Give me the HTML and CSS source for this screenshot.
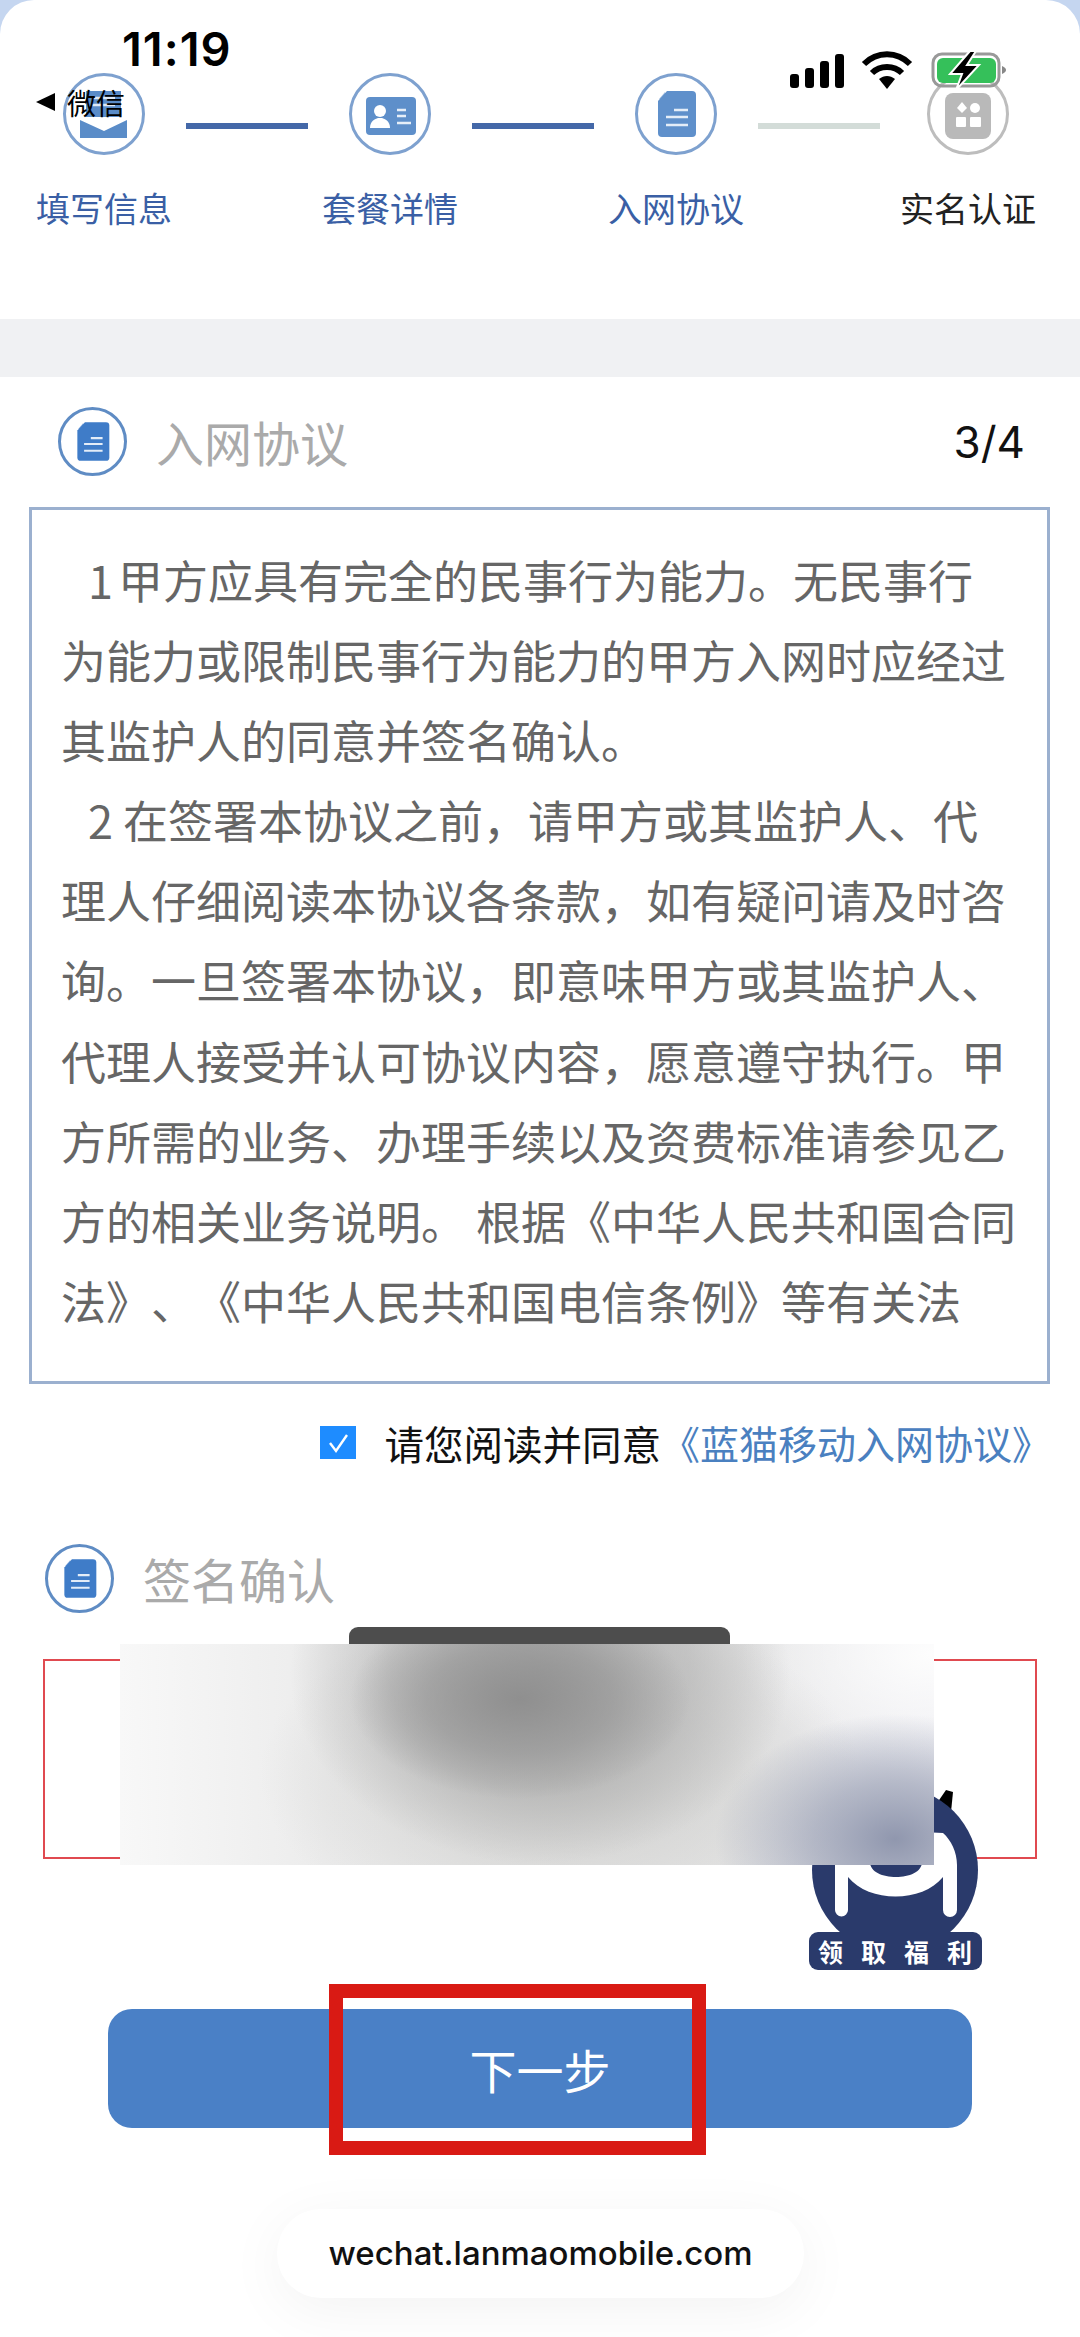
FILE: index.html
```html
<!DOCTYPE html>
<html lang="zh-CN">
<head>
  <meta charset="UTF-8">
  <meta name="viewport" content="width=device-width, initial-scale=1.0">
  <title>入网协议</title>
  <link rel="stylesheet" href="styles.css">
</head>
<body>

<svg class="defs" width="0" height="0">
  <symbol id="icoDoc" viewBox="0 0 82 82">
    <path d="M32 18H57a4 4 0 0 1 4 4V60a4 4 0 0 1-4 4H27a4 4 0 0 1-4-4V28z" fill="currentColor"/>
    <path d="M30 19V26H24z" fill="currentColor" opacity=".55"/>
    <path d="M39 37H53M31 44H53M31 52H53" stroke="#e4edf8" stroke-width="2.6" fill="none"/>
  </symbol>
</svg>

<div class="page">
  <!-- pasos -->
  <section class="steps">
    <div class="step">
      <div class="circle">
        <svg viewBox="0 0 82 82">
          <path d="M23 18H58V44H23z" fill="#5a8cc8"/>
          <path d="M29 25H52M29 32H52" stroke="#dfe9f6" stroke-width="2.5"/>
          <path d="M17 47L41 58L64 47V65H17z" fill="#5a8cc8"/>
        </svg>
      </div>
      <span class="step-name">填写信息</span>
    </div>
    <div class="step-line"></div>
    <div class="step">
      <div class="circle">
        <svg viewBox="0 0 82 82">
          <rect x="17" y="24" width="50" height="38" rx="4" fill="#5e8fca"/>
          <circle cx="31" cy="38" r="6" fill="#fff"/>
          <path d="M21 55C21 48 26 46 29 45H33C36 46 41 48 41 55z" fill="#fff"/>
          <path d="M48 37H57M48 43H57M48 50H62" stroke="#e6eef8" stroke-width="2.6"/>
        </svg>
      </div>
      <span class="step-name">套餐详情</span>
    </div>
    <div class="step-line"></div>
    <div class="step">
      <div class="circle">
        <svg viewBox="0 0 82 82"><use href="#icoDoc"/></svg>
      </div>
      <span class="step-name">入网协议</span>
    </div>
    <div class="step-line off"></div>
    <div class="step last">
      <div class="circle off">
        <svg viewBox="0 0 82 82">
          <rect x="18" y="20" width="46" height="46" rx="8" fill="#b9b9b9"/>
          <path d="M35 29L40 35L35 40L30 35z" fill="#fff"/>
          <circle cx="48" cy="35" r="5" fill="#fff"/>
          <rect x="29" y="44" width="10" height="10" rx="1" fill="#fff"/>
          <rect x="43" y="44" width="11" height="10" rx="1" fill="#fff"/>
        </svg>
      </div>
      <span class="step-name">实名认证</span>
    </div>
  </section>

  <div class="band"></div>

  <!-- protocolo -->
  <section class="sec-head first">
    <div class="sec-icon"><svg viewBox="0 0 82 82"><use href="#icoDoc"/></svg></div>
    <h2>入网协议</h2>
    <span class="count">3/4</span>
  </section>

  <div class="agreement">
    <p><span class="num">1</span>甲方应具有完全的民事行为能力。无民事行<br>
    为能力或限制民事行为能力的甲方入网时应经过<br>
    其监护人的同意并签名确认。</p>
    <p>2 在签署本协议之前，请甲方或其监护人、代<br>
    理人仔细阅读本协议各条款，如有疑问请及时咨<br>
    询。一旦签署本协议，即意味甲方或其监护人、<br>
    代理人接受并认可协议内容，愿意遵守执行。甲<br>
    方所需的业务、办理手续以及资费标准请参见乙<br>
    方的相关业务说明。 根据《中华人民共和国合同<br>
    法》、《中华人民共和国电信条例》等有关法</p>
  </div>

  <div class="agree">
    <span class="check">
      <svg viewBox="0 0 36 32"><path d="M10 17L16 25L27 9" fill="none" stroke="#fff" stroke-width="2.4"/></svg>
    </span>
    <span class="agree-text">请您阅读并同意</span>
    <a class="agree-link">《蓝猫移动入网协议》</a>
  </div>

  <!-- firma -->
  <section class="sec-head second">
    <div class="sec-icon"><svg viewBox="0 0 82 82"><use href="#icoDoc"/></svg></div>
    <h2>签名确认</h2>
  </section>

  <div class="sign"></div>

  <button class="next">下一步</button>

  <!-- encima del contenido -->
  <div class="toast"></div>

  <div class="badge">
    <svg class="badge-logo" viewBox="0 0 173 190">
      <path d="M126 24L137 8L144 10L142 30z" fill="#000"/>
      <circle cx="86" cy="88" r="83" fill="#2a3a6b"/>
      <path d="M26 60V128a6.500 6.500 0 0 0 13 0V95C60 121 113 121 134 95V128a7 7 0 0 0 14 0V83C148 70 142 58 134 51L113 50V80C113 100 61 100 61 80V50L26 50z" fill="#fff"/>
    </svg>
    <div class="badge-label">领取福利</div>
  </div>

  <div class="blur"></div>

  <div class="mark"></div>

  <div class="url">wechat.lanmaomobile.com</div>

  <!-- barra de estado -->
  <div class="time">11:19</div>
  <div class="back"><i></i>微信</div>
  <svg class="status" viewBox="0 0 220 40">
    <rect x="4" y="24" width="9" height="14" rx="3"/>
    <rect x="19" y="18" width="9" height="20" rx="3"/>
    <rect x="34" y="11" width="9" height="27" rx="3"/>
    <rect x="49" y="4" width="9" height="34" rx="3"/>
    <path d="M78 14C91 1 111 1 124 14" fill="none" stroke="#000" stroke-width="6"/>
    <path d="M86 23C94 15 108 15 116 23" fill="none" stroke="#000" stroke-width="6"/>
    <path d="M93 29C98 25 104 25 109 29L101 39z"/>
    <rect x="147" y="4" width="66" height="32" rx="9" fill="none" stroke="#999" stroke-width="3"/>
    <rect x="151" y="8" width="59" height="25" rx="6" fill="#35c05a"/>
    <path d="M216 16c3 1 4 3 4 4s-1 3-4 4z" fill="#888"/>
    <path d="M184 1L164 24H176L170 40L193 15H181L190 1z" stroke="#fff" stroke-width="2"/>
  </svg>
</div>

</body>
</html>
```

FILE: styles.css
```css
* {
  box-sizing: border-box;
}
html, body {
  margin: 0;
  padding: 0;
}
body {
  background-color: #c5d6f0;
  font-family: "Noto Sans CJK SC", "Noto Sans", sans-serif;
  text-spacing-trim: space-all;
}
.defs {
  position: absolute;
}
.page {
  position: relative;
  display: flex;
  flex-direction: column;
  width: 1080px;
  height: 2337px;
  overflow: hidden;
  background-color: #fff;
  border-radius: 34px 34px 0 0;
}
.steps {
  display: flex;
  align-items: flex-start;
  height: 319px;
  padding: 73px 0 0 37px;
}
.step {
  display: flex;
  flex-direction: column;
  align-items: center;
  width: 134px;
}
.step.last {
  margin-left: 6px;
}
.circle {
  width: 82px;
  height: 82px;
  border: 3px solid #7ea1cf;
  border-radius: 50%;
  color: #5f90cb;
}
.circle svg {
  display: block;
  width: 82px;
  height: 82px;
  margin: -3px;
}
.circle.off {
  border-color: #bdbdbd;
}
.step-name {
  margin-top: 33px;
  font-size: 34px;
  line-height: 40px;
  white-space: nowrap;
  color: #3a5fa5;
}
.step.last .step-name {
  color: #222;
}
.step-line {
  width: 122px;
  height: 6px;
  margin: 50px 15px 0;
  background-color: #4468a8;
}
.step-line.off {
  background-color: #d3dcd8;
}
.band {
  height: 58px;
  background-color: #f0f1f3;
}
.sec-head {
  display: flex;
  align-items: center;
  height: 69px;
}
.sec-head.first {
  margin-top: 30px;
  padding: 0 55px 0 58px;
}
.sec-head.second {
  margin-top: 77px;
  padding-left: 45px;
}
.sec-icon {
  flex: none;
  width: 69px;
  height: 69px;
  border: 3px solid #5f8cc4;
  border-radius: 50%;
  color: #3f7cc8;
}
.sec-icon svg {
  display: block;
  width: 69px;
  height: 69px;
  margin: -3px;
}
.sec-head h2 {
  margin: 0 0 0 29px;
  font-size: 48px;
  font-weight: 400;
  line-height: 69px;
  color: #aaa;
}
.count {
  margin-left: auto;
  font-family: "Inter", sans-serif;
  font-size: 44px;
  color: #111;
}
.agreement {
  height: 877px;
  margin: 31px 30px 0 29px;
  padding: 30px 0 0 29px;
  border: 3px solid #9bb0cf;
  overflow: hidden;
}
.agreement p {
  margin: 0;
  font-size: 45px;
  line-height: 80.1px;
  white-space: nowrap;
  color: #666;
  text-indent: 27px;
}
.num {
  margin-right: 5px;
}
.agree {
  display: flex;
  align-items: center;
  justify-content: flex-end;
  height: 50px;
  margin-top: 33px;
  padding-right: 29px;
  font-size: 39px;
  white-space: nowrap;
}
.check {
  width: 36px;
  height: 33px;
  margin-right: 28px;
  background-color: #1e8cff;
}
.check svg {
  display: block;
}
.agree-text {
  font-size: 39.5px;
  color: #111;
}
.agree-link {
  color: #4a80c0;
}
.sign {
  height: 200px;
  margin: 46px 43px 0;
  border: 2px solid #e04a50;
}
.next {
  display: block;
  width: 864px;
  height: 119px;
  margin: 150px 0 0 108px;
  padding: 0;
  border: none;
  border-radius: 24px;
  background-color: #4a80c6;
  font-family: inherit;
  font-size: 47px;
  color: #fff;
}
.toast {
  position: absolute;
  left: 349px;
  top: 1627px;
  width: 381px;
  height: 24px;
  border-radius: 9px 9px 0 0;
  background-color: #4d4d4d;
}
.blur {
  position: absolute;
  left: 120px;
  top: 1644px;
  width: 814px;
  height: 221px;
  background:
    radial-gradient(ellipse 180px 125px at 775px 195px, #9097ae 0%, rgba(144, 151, 174, .6) 45%, rgba(144, 151, 174, 0) 100%),
    radial-gradient(ellipse 170px 100px at 400px 55px, #8f8f8f 0%, rgba(143, 143, 143, .55) 55%, rgba(143, 143, 143, 0) 100%),
    radial-gradient(ellipse 250px 190px at 420px 30px, rgba(170, 170, 170, .95) 0%, rgba(170, 170, 170, .55) 60%, rgba(170, 170, 170, 0) 100%),
    radial-gradient(ellipse 300px 170px at 440px 130px, rgba(200, 200, 198, .9) 0%, rgba(200, 200, 198, 0) 100%),
    radial-gradient(ellipse 190px 120px at 810px 10px, #fdfdfd 0%, rgba(253, 253, 253, 0) 100%),
    linear-gradient(90deg, #f8f8f8 0%, #ececec 25%, #e6e6e6 75%, #eeeef2 100%);
}
.badge {
  position: absolute;
  left: 809px;
  top: 1782px;
  width: 173px;
  height: 188px;
}
.badge-logo {
  display: block;
  width: 173px;
  height: 190px;
}
.badge-label {
  position: absolute;
  left: 0;
  bottom: 0;
  width: 173px;
  height: 38px;
  padding-left: 9px;
  border-radius: 9px;
  background-color: #2a3a6b;
  font-size: 25px;
  font-weight: 700;
  line-height: 38px;
  letter-spacing: 18px;
  white-space: nowrap;
  color: #fff;
}
.mark {
  position: absolute;
  left: 329px;
  top: 1984px;
  width: 377px;
  height: 171px;
  border: 14px solid #d91a14;
}
.url {
  position: absolute;
  left: 277px;
  top: 2209px;
  width: 527px;
  height: 89px;
  border-radius: 44px;
  background-color: #fff;
  box-shadow: 0 12px 60px rgba(0, 0, 0, .05);
  font-family: "Inter", sans-serif;
  font-size: 33px;
  font-weight: 500;
  line-height: 89px;
  text-align: center;
  color: #111;
}
.time {
  position: absolute;
  left: 122px;
  top: 22px;
  font-family: "Inter", sans-serif;
  font-size: 47px;
  font-weight: 600;
  line-height: 54px;
  letter-spacing: 1px;
  color: #000;
}
.back {
  position: absolute;
  left: 67px;
  top: 82px;
  font-size: 29px;
  line-height: 40px;
  color: #000;
}
.back i {
  position: absolute;
  left: -31px;
  top: 11px;
  border-style: solid;
  border-width: 9px 19px 9px 0;
  border-color: transparent #000 transparent transparent;
}
.status {
  position: absolute;
  left: 786px;
  top: 50px;
  width: 220px;
  height: 40px;
}
```
